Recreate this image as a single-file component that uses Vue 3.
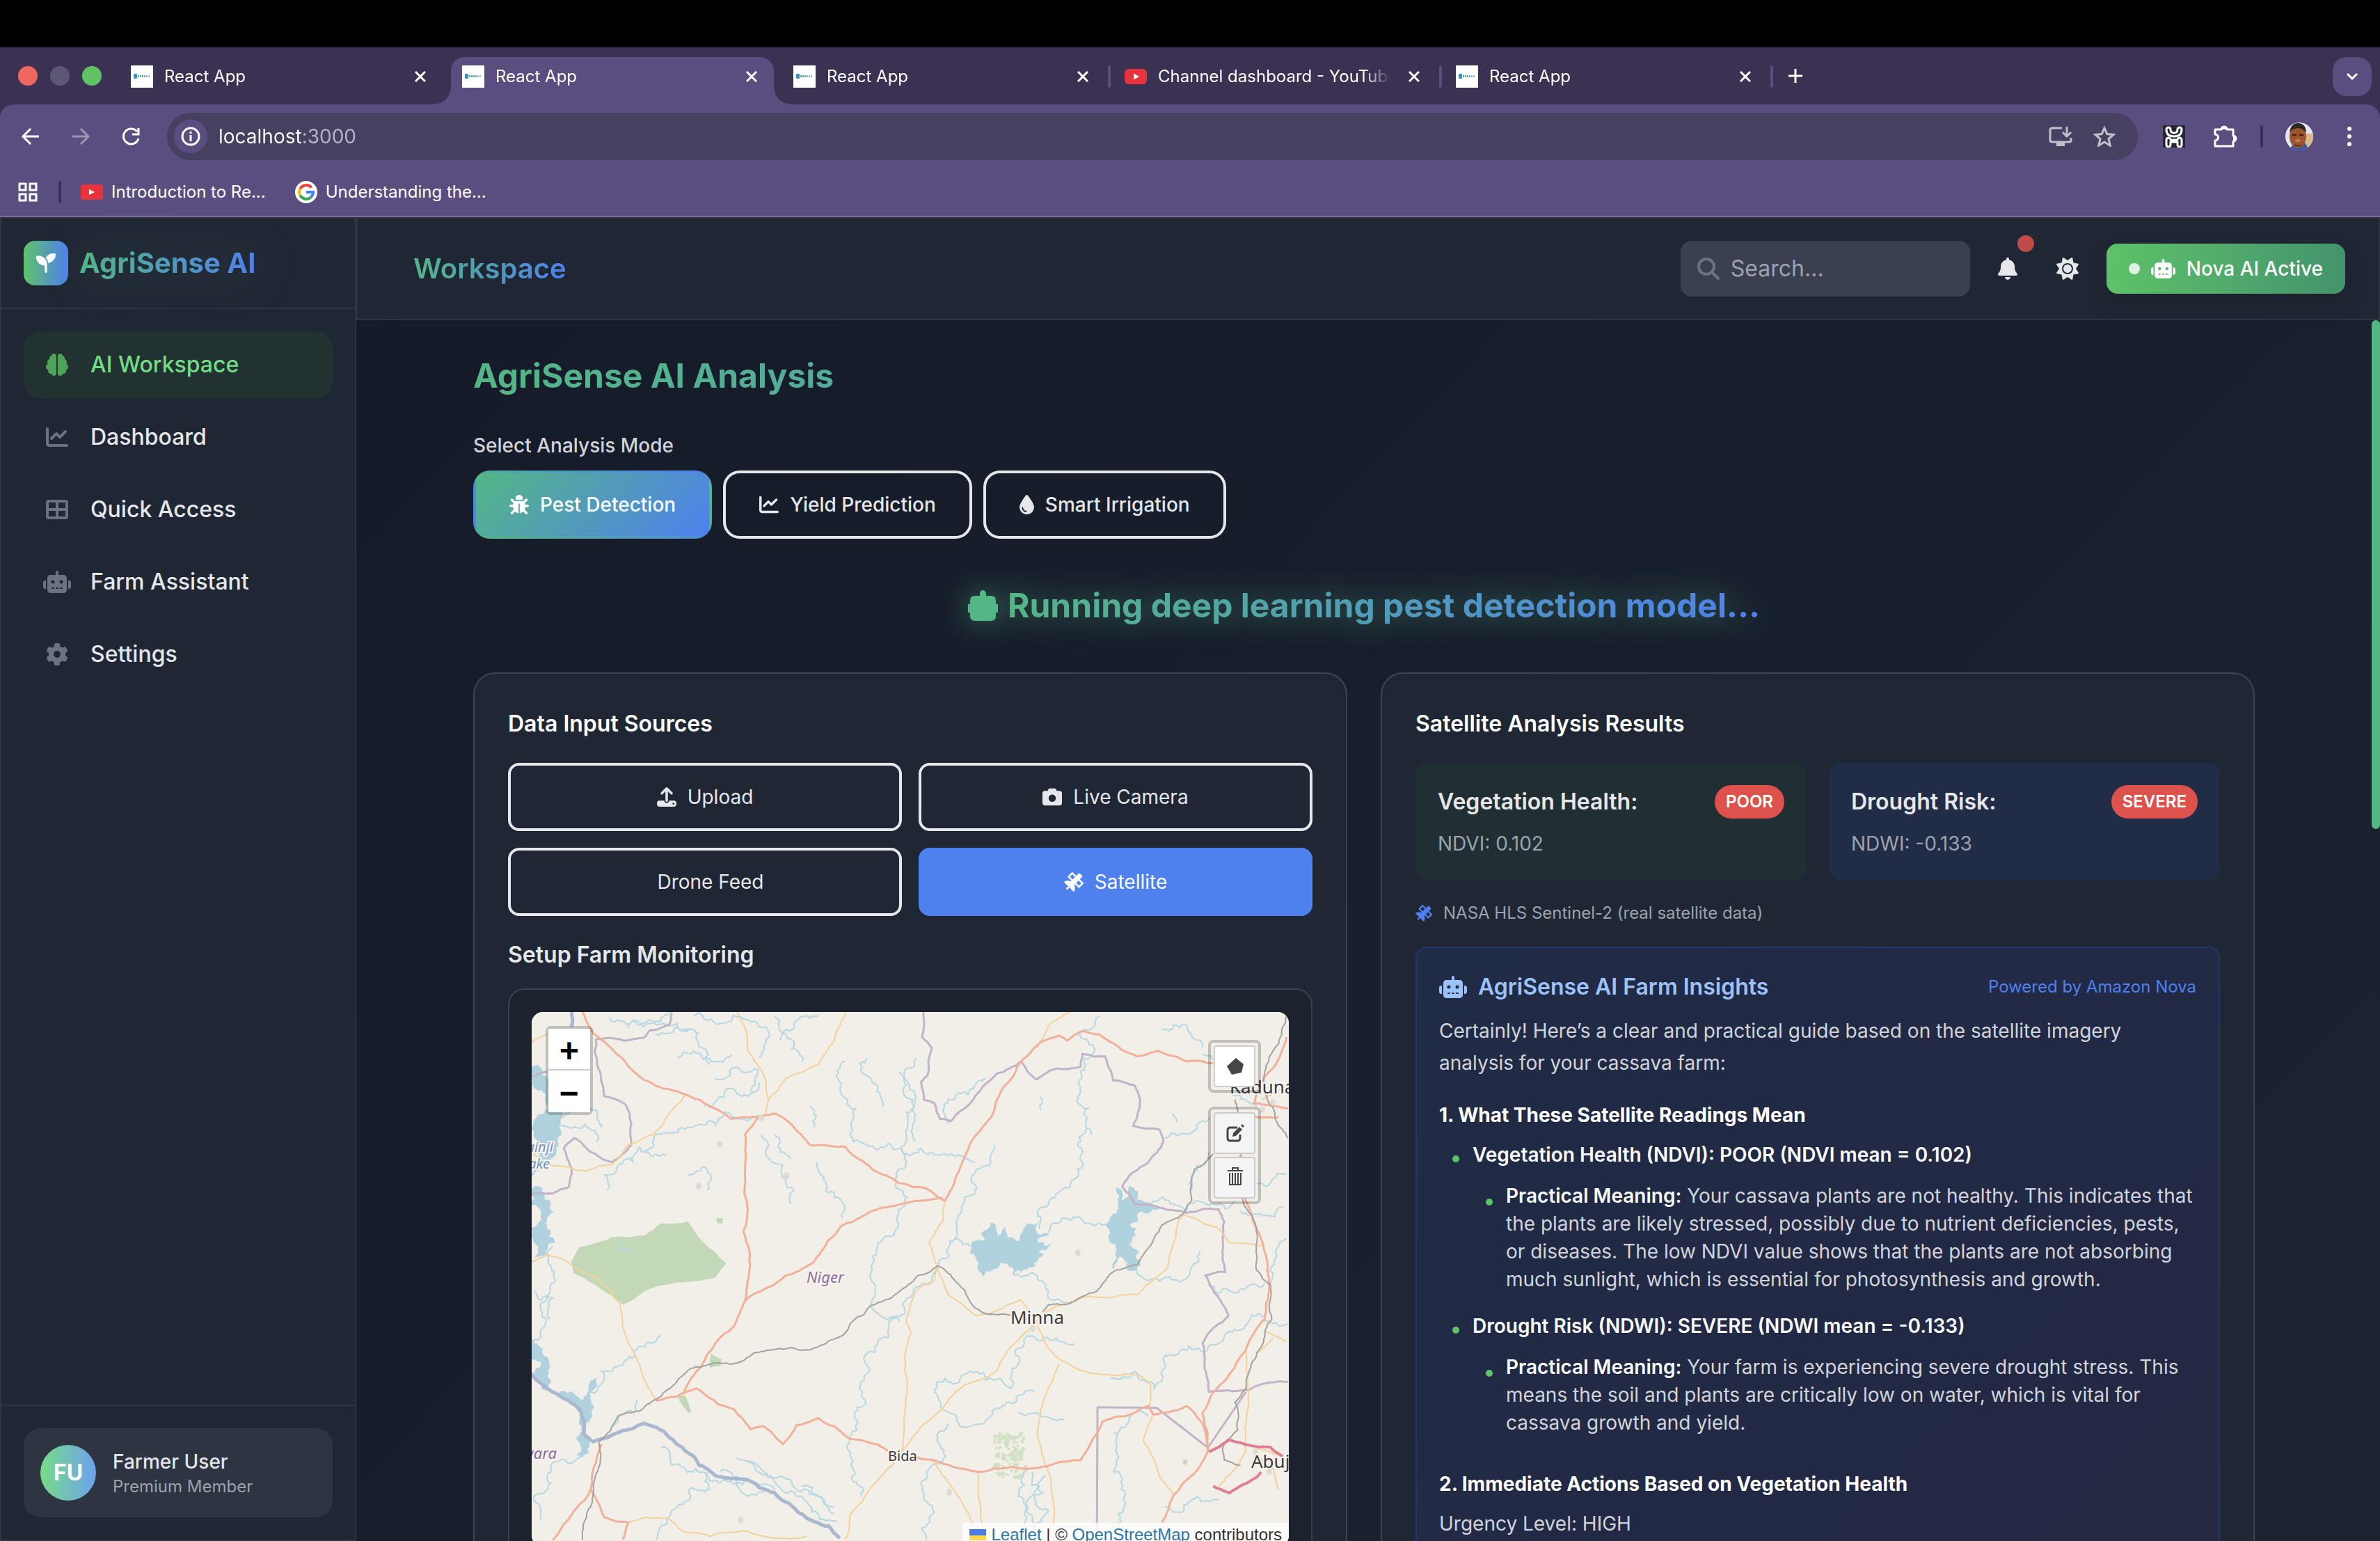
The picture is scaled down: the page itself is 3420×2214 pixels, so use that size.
<script setup>
import { h } from 'vue'

const glyphs = {
  brain: [512, 512, 'M184 0c30.9 0 56 25.1 56 56V456c0 30.9-25.1 56-56 56c-28.9 0-52.7-21.9-55.7-50.1c-5.2 1.4-10.7 2.1-16.3 2.1c-35.3 0-64-28.7-64-64c0-7.4 1.3-14.6 3.6-21.2C21.4 367.4 0 338.2 0 304c0-31.9 18.7-59.5 45.8-72.3C37.1 220.8 32 207 32 192c0-30.7 21.6-56.3 50.4-62.6C80.8 123.9 80 118 80 112c0-29.9 20.6-55.1 48.3-62.1C131.3 21.9 155.1 0 184 0zM328 0c28.9 0 52.6 21.9 55.7 49.9c27.8 7 48.3 32.1 48.3 62.1c0 6-.8 11.9-2.4 17.4c28.8 6.2 50.4 31.9 50.4 62.6c0 15-5.1 28.8-13.8 39.7C493.3 244.5 512 272.1 512 304c0 34.2-21.4 63.4-51.6 74.8c2.3 6.6 3.6 13.8 3.6 21.2c0 35.3-28.7 64-64 64c-5.6 0-11.1-.7-16.3-2.1c-3 28.2-26.8 50.1-55.7 50.1c-30.9 0-56-25.1-56-56V56c0-30.9 25.1-56 56-56z'],
  chart: [512, 512, 'M64 64c0-17.7-14.3-32-32-32S0 46.3 0 64V400c0 44.2 35.8 80 80 80H480c17.7 0 32-14.3 32-32s-14.3-32-32-32H80c-8.8 0-16-7.2-16-16V64zm406.6 86.6c12.5-12.5 12.5-32.8 0-45.3s-32.8-12.5-45.3 0L320 210.7l-57.4-57.4c-12.5-12.5-32.8-12.5-45.3 0l-112 112c-12.5 12.5-12.5 32.8 0 45.3s32.8 12.5 45.3 0L240 221.3l57.4 57.4c12.5 12.5 32.8 12.5 45.3 0l128-128z'],
  grid: [512, 512, 'M64 32H448a64 64 0 0 1 64 64V416a64 64 0 0 1-64 64H64a64 64 0 0 1-64-64V96a64 64 0 0 1 64-64zM448 96H288V224H448zM448 288H288V416H448zM224 224V96H64V224zM64 416H224V288H64z'],
  robot: [640, 512, 'M320 0c17.7 0 32 14.3 32 32V96H472c39.8 0 72 32.2 72 72V440c0 39.8-32.2 72-72 72H168c-39.8 0-72-32.2-72-72V168c0-39.8 32.2-72 72-72H288V32c0-17.7 14.3-32 32-32zM208 384c-8.8 0-16 7.2-16 16s7.2 16 16 16h32c8.8 0 16-7.2 16-16s-7.2-16-16-16H208zm96 0c-8.8 0-16 7.2-16 16s7.2 16 16 16h32c8.8 0 16-7.2 16-16s-7.2-16-16-16H304zm96 0c-8.8 0-16 7.2-16 16s7.2 16 16 16h32c8.8 0 16-7.2 16-16s-7.2-16-16-16H400zM264 256a40 40 0 1 0 -80 0 40 40 0 1 0 80 0zm152 40a40 40 0 1 0 0-80 40 40 0 1 0 0 80zM48 224H64V416H48c-26.5 0-48-21.5-48-48V272c0-26.5 21.5-48 48-48zm544 0c26.5 0 48 21.5 48 48v96c0 26.5-21.5 48-48 48H576V224h16z'],
  gear: [512, 512, 'M495.9 166.6c3.2 8.7 .5 18.4-6.4 24.6l-43.3 39.4c1.1 8.3 1.7 16.8 1.7 25.4s-.6 17.1-1.7 25.4l43.3 39.4c6.9 6.2 9.6 15.9 6.4 24.6c-4.4 11.9-9.7 23.3-15.8 34.3l-4.7 8.1c-6.6 11-14 21.4-22.1 31.2c-5.9 7.2-15.7 9.6-24.5 6.8l-55.7-17.7c-13.4 10.3-28.2 18.9-44 25.4l-12.5 57.1c-2 9.1-9 16.3-18.2 17.8c-13.8 2.3-28 3.5-42.5 3.5s-28.7-1.2-42.5-3.5c-9.2-1.5-16.2-8.7-18.2-17.8l-12.5-57.1c-15.8-6.5-30.6-15.1-44-25.4L83.1 425.9c-8.8 2.8-18.6 .3-24.5-6.8c-8.1-9.8-15.5-20.2-22.1-31.2l-4.7-8.1c-6.1-11-11.4-22.4-15.8-34.3c-3.2-8.7-.5-18.4 6.4-24.6l43.3-39.4C64.6 273.1 64 264.6 64 256s.6-17.1 1.7-25.4L22.4 191.2c-6.9-6.2-9.6-15.9-6.4-24.6c4.4-11.9 9.7-23.3 15.8-34.3l4.7-8.1c6.6-11 14-21.4 22.1-31.2c5.9-7.2 15.7-9.6 24.5-6.8l55.7 17.7c13.4-10.3 28.2-18.9 44-25.4l12.5-57.1c2-9.1 9-16.3 18.2-17.8C227.3 1.2 241.5 0 256 0s28.7 1.2 42.5 3.5c9.2 1.5 16.2 8.7 18.2 17.8l12.5 57.1c15.8 6.5 30.6 15.1 44 25.4l55.7-17.7c8.8-2.8 18.6-.3 24.5 6.8c8.1 9.8 15.5 20.2 22.1 31.2l4.7 8.1c6.1 11 11.4 22.4 15.8 34.3zM256 336a80 80 0 1 0 0-160 80 80 0 1 0 0 160z'],
  sun: [512, 512, 'M361.5 1.2c5 2.1 8.6 6.6 9.6 11.9L391 121l107.9 19.8c5.3 1 9.8 4.6 11.9 9.6s1.5 10.7-1.6 15.2L446.9 256l62.3 90.3c3.1 4.5 3.7 10.2 1.6 15.2s-6.6 8.6-11.9 9.6L391 391 371.1 498.9c-1 5.3-4.6 9.8-9.6 11.9s-10.7 1.5-15.2-1.6L256 446.9l-90.3 62.3c-4.5 3.1-10.2 3.7-15.2 1.6s-8.6-6.6-9.6-11.9L121 391 13.1 371.1c-5.3-1-9.8-4.6-11.9-9.6s-1.5-10.7 1.6-15.2L65.1 256 2.8 165.7c-3.1-4.5-3.7-10.2-1.6-15.2s6.6-8.6 11.9-9.6L121 121 140.9 13.1c1-5.3 4.6-9.8 9.6-11.9s10.7-1.5 15.2 1.6L256 65.1 346.3 2.8c4.5-3.1 10.2-3.7 15.2-1.6zM160 256a96 96 0 1 1 192 0 96 96 0 1 1 -192 0zm224 0a128 128 0 1 0 -256 0 128 128 0 1 0 256 0z'],
  bell: [448, 512, 'M224 0c-17.7 0-32 14.3-32 32V51.2C119 66 64 130.6 64 208v18.8c0 47-17.3 92.4-48.5 127.6l-7.4 8.3c-8.4 9.4-10.4 22.9-5.3 34.4S19.4 416 32 416H416c12.6 0 24-7.4 29.2-18.9s3.1-25-5.3-34.4l-7.4-8.3C401.3 319.2 384 273.9 384 226.8V208c0-77.4-55-142-128-156.8V32c0-17.7-14.3-32-32-32zm45.3 493.3c12-12 18.7-28.3 18.7-45.3H224 160c0 17 6.7 33.3 18.7 45.3s28.3 18.7 45.3 18.7s33.3-6.7 45.3-18.7z'],
  search: [512, 512, 'M416 208c0 45.9-14.9 88.3-40 122.7L502.6 457.4c12.5 12.5 12.5 32.8 0 45.3s-32.8 12.5-45.3 0L330.7 376c-34.4 25.2-76.8 40-122.7 40C93.1 416 0 322.9 0 208S93.1 0 208 0S416 93.1 416 208zM208 352a144 144 0 1 0 0-288 144 144 0 1 0 0 288z'],
  seedling: [512, 512, 'M512 32c0 113.6-84.6 207.5-194.2 222c-7.1-53.4-30.6-101.6-65.3-139.3C290.8 46.3 364 0 448 0h32c17.7 0 32 14.3 32 32zM0 96C0 78.3 14.3 64 32 64H64c123.7 0 224 100.3 224 224v32V480c0 17.7-14.3 32-32 32s-32-14.3-32-32V320C100.3 320 0 219.7 0 96z'],
  drop: [384, 512, 'M192 512C86 512 0 426 0 320C0 228.8 130.2 57.7 166.6 11.7C172.6 4.2 181.5 0 191.1 0h1.8c9.6 0 18.5 4.2 24.5 11.7C253.8 57.7 384 228.8 384 320c0 106-86 192-192 192zM96 336c0-8.8-7.2-16-16-16s-16 7.2-16 16c0 61.9 50.1 112 112 112c8.8 0 16-7.2 16-16s-7.2-16-16-16c-44.2 0-80-35.8-80-80z'],
  camera: [512, 512, 'M149.1 64.8L138.7 96H64C28.7 96 0 124.7 0 160V416c0 35.3 28.7 64 64 64H448c35.3 0 64-28.7 64-64V160c0-35.3-28.7-64-64-64H373.3L362.9 64.8C356.4 45.2 338.1 32 317.4 32H194.6c-20.7 0-39 13.2-45.5 32.8zM256 192a96 96 0 1 1 0 192 96 96 0 1 1 0-192z'],
  upload: [512, 512, 'M288 109.3V352c0 17.7-14.3 32-32 32s-32-14.3-32-32V109.3l-73.4 73.4c-12.5 12.5-32.8 12.5-45.3 0s-12.5-32.8 0-45.3l128-128c12.5-12.5 32.8-12.5 45.3 0l128 128c12.5 12.5 12.5 32.8 0 45.3s-32.8 12.5-45.3 0L288 109.3zM64 352H192c0 35.3 28.7 64 64 64s64-28.7 64-64H448c35.3 0 64 28.7 64 64v32c0 35.3-28.7 64-64 64H64c-35.3 0-64-28.7-64-64V416c0-35.3 28.7-64 64-64zM432 456a24 24 0 1 0 0-48 24 24 0 1 0 0 48z'],
  satellite: [512, 512, 'M233 7c-9.4-9.4-24.6-9.4-33.9 0l-96 96c-9.4 9.4-9.4 24.6 0 33.9l89.4 89.4-15.5 15.5C152.3 230.4 124.9 224 96 224c-31.7 0-61.5 7.7-87.8 21.2c-9 4.7-10.3 16.7-3.1 23.8L112.7 376.7 96.3 393.1c-2.6-.7-5.4-1.1-8.3-1.1c-17.7 0-32 14.3-32 32s14.3 32 32 32s32-14.3 32-32c0-2.9-.4-5.6-1.1-8.3l16.4-16.4L242.9 506.9c7.2 7.2 19.2 5.9 23.8-3.1C280.3 477.5 288 447.7 288 416c0-28.9-6.4-56.3-17.8-80.9l15.5-15.5 89.4 89.4c9.4 9.4 24.6 9.4 33.9 0l96-96c9.4-9.4 9.4-24.6 0-33.9l-89.4-89.4 55-55c12.5-12.5 12.5-32.8 0-45.3l-48-48c-12.5-12.5-32.8-12.5-45.3 0l-55 55L233 7zm159 351l-72.4-72.4 62.1-62.1L454.1 296 392 358.1zM226.3 192.4L153.9 120 216 57.9l72.4 72.4-62.1 62.1z'],
  bug: [512, 512, 'M256 0c53 0 96 43 96 96v3.6c0 15.7-12.7 28.4-28.4 28.4H188.4c-15.7 0-28.4-12.7-28.4-28.4V96c0-53 43-96 96-96zM41.4 105.4c12.5-12.5 32.8-12.5 45.3 0l64 64c.7 .7 1.3 1.4 1.9 2.1c14.2-7.3 30.4-11.4 47.5-11.4H312c17.1 0 33.2 4.1 47.5 11.4c.6-.7 1.2-1.4 1.9-2.1l64-64c12.5-12.5 32.8-12.5 45.3 0s12.5 32.8 0 45.3l-64 64c-.7 .7-1.4 1.3-2.1 1.9c6.2 12 10.1 25.3 11.1 39.5H480c17.7 0 32 14.3 32 32s-14.3 32-32 32H416c0 24.6-5.5 47.8-15.4 68.6c2.2 1.3 4.2 2.9 6 4.8l64 64c12.5 12.5 12.5 32.8 0 45.3s-32.8 12.5-45.3 0l-63.1-63.1c-24.5 21.8-55.8 36.2-90.3 39.6V240c0-8.8-7.2-16-16-16s-16 7.2-16 16V479.2c-34.5-3.4-65.8-17.8-90.3-39.6L86.6 502.6c-12.5 12.5-32.8 12.5-45.3 0s-12.5-32.8 0-45.3l64-64c1.9-1.9 3.9-3.4 6-4.8C101.5 367.8 96 344.6 96 320H32c-17.7 0-32-14.3-32-32s14.3-32 32-32H96.3c1.1-14.1 5-27.5 11.1-39.5c-.7-.6-1.4-1.2-2.1-1.9l-64-64c-12.5-12.5-12.5-32.8 0-45.3z'],
}

const Icon = (props) => {
  const [w, ht, d] = glyphs[props.name]
  return h(
    'svg',
    { width: (props.size * w) / ht, height: props.size, viewBox: `0 0 ${w} ${ht}`, 'aria-hidden': 'true' },
    [h('path', { fill: 'currentColor', 'fill-rule': 'evenodd', d })],
  )
}
Icon.props = ['name', 'size']

const tabs = [
  { title: 'React App', kind: 'app' },
  { title: 'React App', kind: 'app', active: true },
  { title: 'React App', kind: 'app', divider: true },
  { title: 'Channel dashboard - YouTube', kind: 'video', divider: true },
  { title: 'React App', kind: 'app', divider: true },
]

const nav = [
  { label: 'AI Workspace', icon: 'brain', active: true },
  { label: 'Dashboard', icon: 'chart' },
  { label: 'Quick Access', icon: 'grid' },
  { label: 'Farm Assistant', icon: 'robot' },
  { label: 'Settings', icon: 'gear' },
]

const modes = [
  { label: 'Pest Detection', icon: 'bug', active: true },
  { label: 'Yield Prediction', icon: 'chart' },
  { label: 'Smart Irrigation', icon: 'drop' },
]

const sources = [
  { label: 'Upload', icon: 'upload' },
  { label: 'Live Camera', icon: 'camera' },
  { label: 'Drone Feed' },
  { label: 'Satellite', icon: 'satellite', active: true },
]

const stats = [
  { name: 'Vegetation Health:', level: 'POOR', reading: 'NDVI: 0.102', tone: 'green' },
  { name: 'Drought Risk:', level: 'SEVERE', reading: 'NDWI: -0.133', tone: 'blue' },
]

const findings = [
  {
    title: 'Vegetation Health (NDVI): POOR (NDVI mean = 0.102)',
    text: 'Your cassava plants are not healthy. This indicates that the plants are likely stressed, possibly due to nutrient deficiencies, pests, or diseases. The low NDVI value shows that the plants are not absorbing much sunlight, which is essential for photosynthesis and growth.',
  },
  {
    title: 'Drought Risk (NDWI): SEVERE (NDWI mean = -0.133)',
    text: 'Your farm is experiencing severe drought stress. This means the soil and plants are critically low on water, which is vital for cassava growth and yield.',
  },
]

/* Map drawing: survey points are projected to the panel, then roughened by midpoint displacement. */
let seed = 7
const rand = () => {
  seed = (seed * 16807) % 2147483647
  return seed / 2147483647 - 0.5
}
const parse = (s) => s.split(' ').map((p) => p.split(',').map(Number)).map(([x, y]) => [(x - 31) * 0.778, (y - 48) * 0.5])
const rough = (s, amp = 0.2, close = false) => {
  let pts = parse(s)
  if (close) pts.push(pts[0])
  for (let n = 0; n < 6; n++) {
    const out = [pts[0]]
    for (let i = 1; i < pts.length; i++) {
      const [a, b] = [pts[i - 1], pts[i]]
      const dx = b[0] - a[0]
      const dy = b[1] - a[1]
      if (Math.hypot(dx, dy) > 6) {
        const k = rand() * amp
        out.push([(a[0] + b[0]) / 2 - dy * k, (a[1] + b[1]) / 2 + dx * k])
      }
      out.push(b)
    }
    pts = out
  }
  return 'M' + pts.map((p) => p.map((v) => v.toFixed(1)).join(',')).join('L') + (close ? 'Z' : '')
}

const lakes = [
  '31,205 50,215 60,240 62,330 88,345 85,400 75,450 65,470 45,500 31,520',
  '31,562 50,555 50,590 65,600 58,640 62,690 72,710 55,745 40,750 45,720 35,700 31,690',
  '842,740 845,710 870,705 862,685 880,655 890,695 905,670 908,700 930,710 955,660 965,655 970,690 985,685 965,710 990,714 965,735 975,745 945,765 960,775 940,785 920,800 910,770 895,765 870,790 865,805 858,770',
  '1112,555 1120,590 1135,550 1150,590 1190,610 1150,625 1135,660 1145,690 1130,720 1155,775 1135,790 1120,750 1105,785 1098,700 1100,640 1115,600',
  '80,1150 104,1140 128,1165 150,1100 138,1160 142,1210 128,1260 124,1325 116,1320 120,1230 122,1195 96,1165',
  '31,990 50,1030 62,1060 66,1110 50,1130 50,1060 31,1010',
].map((s) => rough(s, 0.6, true))

const parks = [
  '120,722 180,695 240,690 270,655 320,650 345,705 390,770 370,812 300,825 240,850 200,890 160,845 108,798 104,765',
  '372,640 384,640 384,655 374,655',
  '362,1030 382,1045 380,1065 360,1070',
  '300,1150 315,1150 326,1195 320,1200',
  '1234,1335 1243,1335 1240,1350 1234,1346',
].map((s) => rough(s, 0.1, true))

const streams = [
  '175,65 260,75 290,50', '210,95 250,70 300,80 340,110', '260,110 300,90 345,150 360,200', '330,60 380,80 430,70 470,110 450,180',
  '300,180 330,160 370,190 400,170', '370,240 400,210 450,215 440,280', '350,320 390,270 430,290 450,250', '490,130 510,100 560,60', '480,60 500,110 530,190',
  '40,380 90,375 130,370 150,420', '90,350 130,300 150,330 160,380', '60,260 90,230 120,270', '170,560 190,490 280,460', '320,520 355,500 355,560', '240,445 260,400 340,370 440,345',
  '455,400 470,470 500,530 510,600', '480,400 490,450 510,470', '560,480 570,530 590,580 605,640', '545,320 552,380', '610,190 615,300 625,420 650,430 690,425 720,455 750,440 800,460 850,480',
  '650,180 640,220 670,260 680,320', '710,220 740,300 725,380 720,470 715,560 705,640 700,690 670,720 660,750 665,830 660,900 710,940', '740,180 735,300 740,420', '800,370 790,330 820,280 870,240',
  '885,430 870,490 850,510 830,580 815,650 812,700 780,780 760,830 720,880 690,950 670,1000 655,1080 640,1150 632,1250 625,1340 622,1390 640,1440', '812,700 845,720',
  '1080,60 1040,110 1070,150 1045,220 1040,290 1055,370 1050,450 1040,520 1000,570 965,620 968,670', '970,290 972,330', '1195,100 1240,85 1270,150', '1200,410 1250,395 1285,350', '1215,340 1222,365',
  '985,680 1010,640 1040,635 1060,655 1100,660', '920,800 980,830 985,870 1030,885', '1150,780 1190,820 1240,815 1250,780 1265,735', '1280,830 1320,850 1360,830 1385,825',
  '1425,700 1405,740 1400,810 1390,830', '1100,1100 1180,1130 1195,1080 1230,1020 1290,1005 1330,960 1428,945', '775,1140 780,1110 830,1090 870,1105 915,1130', '775,1140 790,1190 820,1230 870,1220 900,1180 930,1150 960,1135',
  '940,990 1000,985 1035,1000', '940,990 930,1060 915,1130', '800,1230 780,1280 790,1340 760,1370 755,1440 765,1500 760,1565', '930,1200 980,1210 1015,1220', '1170,1210 1120,1240 1115,1330 1120,1400 1125,1470 1095,1530',
  '270,975 240,1010 220,1040 160,1080 140,1140', '225,1160 220,1200 180,1240', '125,1325 80,1340 60,1380 35,1440 50,1510', '355,1370 360,1420 300,1470 280,1520 260,1565', '270,1300 290,1350 350,1370 410,1400 480,1420',
  '410,1330 460,1370 500,1390 540,1420 590,1490', '430,1340 480,1400 530,1440 560,1490 595,1510', '380,1370 420,1430 460,1430', '530,1410 560,1440 590,1470', '940,1370 930,1440 945,1500 925,1565', '980,1380 960,1440 985,1480 960,1565',
  '955,1370 975,1430 945,1480 960,1530', '1200,1470 1260,1440 1300,1450', '1370,540 1425,510', '1330,590 1290,600 1240,620', '35,850 70,870 65,930', '70,720 75,820 50,920 35,990', '190,700 195,730 220,738', '1240,620 1150,610',
  '1270,170 1330,180 1320,260 1370,320', '1060,380 1065,400', '1280,450 1260,490 1250,560', '1340,620 1420,610',
].map((s) => rough(s, 0.6))

const bigRivers = [
  '31,1085 60,1130 100,1165 123,1200 127,1260 145,1283 200,1250 240,1230 280,1262 310,1300 340,1350 370,1380 420,1390 480,1430 520,1480 550,1510 580,1525 600,1560',
  '105,48 104,90',
].map((s) => rough(s, 0.2))

const borders = [
  '150,125 200,130 240,120 250,100 285,85 290,50', '150,125 152,200 165,290 205,315 215,370 215,430 180,480 140,450 110,410 90,440 105,500 100,550 70,570 31,570', '31,235 60,220',
  '755,48 752,120 770,150 762,230 750,250 755,300 775,310 785,355 805,362 825,330 850,290 890,225 935,190 950,225 965,242 1000,210 1045,205 1048,168 1090,175 1105,245 1145,260 1155,300 1142,375 1190,385 1198,420 1170,480 1140,510 1122,550 1145,600 1190,610 1240,625 1300,615 1310,650 1312,795 1275,805 1318,920 1270,1000 1282,1140 1350,1135 1428,1110',
].map((s) => rough(s, 0.15)).concat(rough('1350,1140 1280,1300 1185,1185 1076,1184 1075,1540', 0))

const trunks = [
  '125,48 145,110 180,155 220,220 260,260 315,285 360,320 400,355 440,350 480,340 510,370 545,430 610,435 660,500 710,540 760,555 795,590',
  '450,350 425,400 425,520 430,620 422,680 434,740 425,878', '425,878 500,805 550,770 578,705 605,660 680,610 740,590 790,582', '425,878 405,950 370,1000 345,1065 310,1145',
  '795,590 815,520 840,430 880,350 900,270 935,190 970,135 1005,115 1020,130 1050,102 1080,112 1120,155 1150,175 1190,160 1240,190 1290,195', '260,1165 335,1130 375,1175 405,1190 435,1247 460,1238 495,1290 520,1235 560,1215 620,1275 670,1290 690,1310 770,1335 855,1370 920,1355 1045,1335 1085,1225 1170,1180 1180,1205 1240,1180 1270,1230 1280,1310 1250,1380 1215,1440 1195,1515',
  '1425,120 1400,210 1385,235 1365,310 1428,325', '1340,460 1350,590 1370,670 1390,770 1385,930 1350,1020 1290,1140 1270,1200 1280,1310', '1365,350 1410,350', '140,1420 165,1500 210,1515 200,1565', '140,1420 110,1480 70,1565', '160,1290 145,1360 140,1420',
].map((s) => rough(s, 0.12))

const roads = [
  '410,48 425,90 430,160 455,215 468,300 462,345', '468,300 500,240 560,200 590,130 612,48', '31,135 60,110 145,100', '315,285 290,330 255,400 210,430 180,485 130,505 70,490 31,450',
  '31,765 60,745 105,775 150,810 195,890 200,960 230,1060 262,1165', '795,590 790,650 765,710 780,780 775,820 740,850 722,940 732,970 720,1040 722,1180 715,1310', '780,780 800,860 850,920 900,900 935,875 965,940',
  '1025,48 990,80 965,150', '980,910 1060,865 1150,860 1205,785 1225,650 1235,630 1300,670 1320,710 1380,720', '965,950 980,1000 1005,1045 1060,1085 1150,1090 1175,1120 1172,1180', '965,935 930,990 890,1080 830,1120 780,1200 740,1260 715,1310',
  '1005,1060 985,1130 965,1260 990,1390 995,1540', '715,1320 660,1410 620,1490 610,1565', '770,1335 810,1420 830,1470 855,1540', '855,1375 865,1540', '1180,1200 1160,1280 1190,1380 1215,1430',
  '210,1515 240,1500 285,1505 310,1540 360,1555 430,1540 480,1560 540,1555', '1350,1020 1355,1180 1350,1310 1300,1410', '1385,965 1425,995', '1400,985 1370,1030', '1380,300 1428,260', '1375,1330 1400,1360 1410,1420', '1370,1300 1410,1320',
].map((s) => rough(s, 0.12))

const rails = [
  '125,1565 135,1480 145,1430 155,1285 190,1210 230,1195 280,1135 325,1072 400,1060 490,1015 530,1020 575,1000 610,970 625,935 660,890 720,840 745,805 780,778 810,815 845,890 870,915 915,920',
  '975,910 985,890 1020,888 1075,850 1100,800 1150,775 1165,735 1195,660 1225,640 1250,590 1255,500 1290,455', '1425,60 1400,160 1385,220 1390,300 1428,410', '1330,300 1345,420 1340,560 1368,660 1370,790 1395,830 1398,930 1360,1060 1350,1130 1330,1170 1335,1250 1310,1290 1310,1335 1340,1350',
].map((s) => rough(s, 0.2))

const motorways = ['1282,1312 1320,1278 1395,1298 1418,1325', '1290,1410 1320,1430 1370,1385 1378,1370'].map((s) => rough(s, 0.1))
const towns = [
  [330, 152], [366, 235], [720, 455], [1050, 140], [1065, 130], [1048, 645], [1060, 660], [1040, 632], [240, 250], [270, 190], [600, 690], [300, 730], [785, 346],
]
const scrub = Array.from({ length: 110 }, () => [688 + rand() * 46, 638 + rand() * 66, 1 + Math.abs(rand()) * 5])
</script>

<template>
  <div class="screen">
    <div class="notch"></div>

    <header class="browser">
      <div class="tab-strip">
        <div class="lights"><i class="red"></i><i class="grey"></i><i class="green"></i></div>
        <div class="tabs" role="tablist">
          <div v-for="(tab, i) in tabs" :key="i" class="tab" :class="{ active: tab.active, divider: tab.divider }" role="tab">
            <svg v-if="tab.kind === 'app'" width="32" height="32" viewBox="0 0 32 32">
              <rect width="32" height="32" fill="#fff" />
              <rect x="4" y="12" width="5" height="7" rx="1" fill="#3d8fc0" />
              <path d="M10 15.500H20" stroke="#52b788" stroke-width="3" stroke-dasharray="2 1" />
              <path d="M19 15.500H28" stroke="#5b9be8" stroke-width="2" stroke-dasharray="2 1" />
            </svg>
            <svg v-else width="32" height="32" viewBox="0 0 32 32">
              <rect y="5" width="32" height="22" rx="6" fill="#e8323c" />
              <path d="M13 11.500L21 16L13 20.500Z" fill="#fff" />
            </svg>
            <span class="tab-title">{{ tab.title }}</span>
            <button class="plain" aria-label="Close tab">
              <svg width="16" height="16" viewBox="0 0 16 16"><path d="M1 1L15 15M15 1L1 15" stroke="#fff" stroke-width="3" /></svg>
            </button>
          </div>
          <button class="plain new-tab" aria-label="New tab">
            <svg width="20" height="20" viewBox="0 0 20 20"><path d="M10 0V20M0 10H20" stroke="#fff" stroke-width="3" /></svg>
          </button>
        </div>
        <button class="tab-list" aria-label="Search tabs">
          <svg width="18" height="12" viewBox="0 0 18 12"><path d="M2 2L9 9L16 2" fill="none" stroke="#fff" stroke-width="3" /></svg>
        </button>
      </div>

      <div class="toolbar">
        <button class="plain" aria-label="Back">
          <svg width="28" height="28" viewBox="0 0 28 28"><path d="M26 14H4M14 3L3 14L14 25" fill="none" stroke="#fff" stroke-width="3" /></svg>
        </button>
        <button class="plain" aria-label="Forward">
          <svg width="28" height="28" viewBox="0 0 28 28"><path d="M2 14H24M14 3L25 14L14 25" fill="none" stroke="#9d95b3" stroke-width="3" /></svg>
        </button>
        <button class="plain" aria-label="Reload">
          <svg width="28" height="28" viewBox="0 0 28 28"><path d="M23 7A11 11 0 1 0 25 17" fill="none" stroke="#fff" stroke-width="3" /><path d="M25 2V11H16" fill="none" stroke="#fff" stroke-width="3" /></svg>
        </button>
        <div class="omnibox">
          <span class="site-info">
            <svg width="28" height="28" viewBox="0 0 28 28"><circle cx="14" cy="14" r="12" fill="none" stroke="#fff" stroke-width="3" /><path d="M14 12V21M14 7V10" stroke="#fff" stroke-width="3" /></svg>
          </span>
          <input class="url" type="text" aria-label="Address" value="localhost:3000" />
          <button class="plain" aria-label="Install app">
            <svg width="34" height="30" viewBox="0 0 34 30"><path d="M19 3H5Q2 3 2 6V20Q2 23 5 23H29Q32 23 32 20V17" fill="none" stroke="#c3c0cc" stroke-width="3" /><path d="M11 23H23V29H11Z" fill="#c3c0cc" /><path d="M26 1V14M20 9L26 15L32 9" fill="none" stroke="#c3c0cc" stroke-width="3" /></svg>
          </button>
          <button class="plain" aria-label="Bookmark this page">
            <svg width="32" height="30" viewBox="0 0 32 30"><path d="M16 3L19.800 11.500L29 12.500L22 18.600L24.200 28L16 23L7.800 28L10 18.600L3 12.500L12.200 11.500Z" fill="none" stroke="#c3c0cc" stroke-width="3" /></svg>
          </button>
        </div>
        <button class="plain ext" aria-label="Extension">
          <svg width="32" height="32" viewBox="0 0 32 32"><rect width="32" height="32" fill="#242634" /><g fill="none" stroke="#fff" stroke-width="3" stroke-linecap="round" stroke-linejoin="round"><path d="M8 3A3 3 0 0 0 5 6Q5 16 16 16Q27 16 27 6A3 3 0 0 0 21 6Q21 11 16 11Q11 11 11 6A3 3 0 0 0 8 3Z" /><path d="M5 28V21A3 3 0 0 1 11 21H21A3 3 0 0 1 27 21V28A3 3 0 0 1 21 28V24H11V28A3 3 0 0 1 5 28Z" /></g></svg>
        </button>
        <button class="plain puzzle" aria-label="Extensions">
          <svg width="36" height="36" viewBox="0 0 36 36"><path d="M3 8H12A4 4 0 0 1 20 8H29V17A4 4 0 0 1 29 25V32H3V24A4 4 0 0 0 3 15Z" fill="none" stroke="#fff" stroke-width="3" stroke-linejoin="round" /><path d="M12 8A4 4 0 0 1 20 8ZM29 17A4 4 0 0 1 29 25Z" fill="#fff" /></svg>
        </button>
        <i class="bar"></i>
        <button class="plain photo" aria-label="Profile">
          <svg width="40" height="40" viewBox="0 0 40 40">
            <defs><clipPath id="face"><circle cx="20" cy="20" r="20" /></clipPath></defs>
            <g clip-path="url(#face)">
              <rect width="40" height="40" fill="#dfe8f4" />
              <rect x="30" y="16" width="10" height="24" fill="#d9b98c" />
              <path d="M6 40L12 28H28L34 40Z" fill="#3a56a0" />
              <ellipse cx="18" cy="20" rx="12" ry="17" fill="#9a5631" />
              <path d="M6 14Q8 1 18 1Q29 1 30 14Q24 8 18 8Q11 8 6 14Z" fill="#2f2723" />
              <path d="M10 18H16M20 18H26" stroke="#3a1f14" stroke-width="2" />
              <ellipse cx="18" cy="26" rx="4" ry="2" fill="#c77a4c" />
              <path d="M13 32Q18 35 23 32" stroke="#5c2c1c" stroke-width="2" fill="none" />
            </g>
          </svg>
        </button>
        <button class="plain more" aria-label="Menu">
          <svg width="8" height="28" viewBox="0 0 8 28"><g fill="#fff"><circle cx="4" cy="3" r="3" /><circle cx="4" cy="14" r="3" /><circle cx="4" cy="25" r="3" /></g></svg>
        </button>
      </div>

      <nav class="bookmarks">
        <svg width="28" height="28" viewBox="0 0 28 28" fill="none" stroke="#fff" stroke-width="3"><path d="M2 2H11V11H2ZM17 2H26V11H17ZM2 17H11V26H2ZM17 17H26V26H17Z" /></svg>
        <i class="bar"></i>
        <a href="#">
          <svg width="32" height="32" viewBox="0 0 32 32"><rect y="5" width="32" height="22" rx="3" fill="#e8323c" /><path d="M12 12L20 16L12 20Z" fill="#fff" /></svg>
          Introduction to Re...
        </a>
        <a href="#">
          <svg width="32" height="32" viewBox="0 0 32 32"><circle cx="16" cy="16" r="16" fill="#fff" /><g fill="none" stroke-width="4"><path d="M23.500 9.500A10 10 0 0 0 7.300 11.200" stroke="#ea4335" /><path d="M7.300 11.200A10 10 0 0 0 7.300 20.800" stroke="#fbbc04" /><path d="M7.300 20.800A10 10 0 0 0 22.500 23.600" stroke="#34a853" /><path d="M22.500 23.600A10 10 0 0 0 26 16H16" stroke="#4285f4" /></g></svg>
          Understanding the...
        </a>
      </nav>
    </header>

    <div class="app">
      <aside class="sidebar">
        <div class="brand">
          <span class="logo"><Icon name="seedling" :size="28" /></span>
          <span class="brand-name">AgriSense AI</span>
        </div>
        <nav class="menu">
          <a v-for="item in nav" :key="item.label" href="#" :class="{ active: item.active }">
            <span class="menu-icon"><Icon :name="item.icon" :size="32" /></span>{{ item.label }}
          </a>
        </nav>
        <div class="account">
          <div class="account-card">
            <span class="avatar">FU</span>
            <div>
              <div class="user-name">Farmer User</div>
              <div class="user-plan">Premium Member</div>
            </div>
          </div>
        </div>
      </aside>

      <div class="content">
        <header class="topbar">
          <h1>Workspace</h1>
          <label class="search">
            <Icon name="search" :size="32" />
            <input type="search" placeholder="Search..." aria-label="Search" />
          </label>
          <button class="plain bell" aria-label="Notifications"><Icon name="bell" :size="32" /><i></i></button>
          <button class="plain sun" aria-label="Theme"><Icon name="sun" :size="32" /></button>
          <button class="nova"><i></i><Icon name="robot" :size="28" /><span>Nova AI Active</span></button>
        </header>

        <div class="viewport">
          <main>
            <h2 class="title">AgriSense AI Analysis</h2>
            <div class="label">Select Analysis Mode</div>
            <div class="modes">
              <button v-for="m in modes" :key="m.label" class="outline mode" :class="{ chosen: m.active }">
                <Icon :name="m.icon" :size="28" />{{ m.label }}
              </button>
            </div>

            <div class="status">
              <svg width="43" height="44" viewBox="0 0 43 44"><path d="M21.500 0C24 0 26 2 26 5V8H33Q40 8 40 15V20H43V32H40V37Q40 44 33 44H10Q3 44 3 37V32H0V20H3V15Q3 8 10 8H17V5C17 2 19 0 21.500 0Z" fill="#54b685" /></svg>
              <span>Running deep learning pest detection model...</span>
            </div>

            <div class="cards">
              <section class="card">
                <h3>Data Input Sources</h3>
                <div class="sources">
                  <button v-for="s in sources" :key="s.label" class="outline" :class="{ solid: s.active }">
                    <Icon v-if="s.icon" :name="s.icon" :size="28" />
                    <span v-else class="no-icon"></span>
                    {{ s.label }}
                  </button>
                </div>
                <h3 class="soft">Setup Farm Monitoring</h3>
                <div class="map-frame">
                  <div class="map">
                    <svg class="tiles" viewBox="0 0 1088 768" preserveAspectRatio="xMinYMin slice">
                      <rect width="1088" height="768" fill="#f2efe9" />
                      <path v-for="(d, i) in parks" :key="'p' + i" :d="d" fill="#c3d8b6" />
                      <circle v-for="(c, i) in scrub" :key="'s' + i" :cx="c[0]" :cy="c[1]" :r="c[2]" fill="#d2e1c5" />
                      <g fill="none" stroke="#b7d7e2" stroke-width="2">
                        <path v-for="(d, i) in streams" :key="'w' + i" :d="d" />
                      </g>
                      <path v-for="(d, i) in lakes" :key="'l' + i" :d="d" fill="#b0d2de" stroke="#b0d2de" stroke-width="2" />
                      <g fill="none" stroke-linejoin="round">
                        <path v-for="(d, i) in bigRivers" :key="'b' + i" :d="d" stroke="#a9b8cf" stroke-width="5" />
                        <path v-for="(d, i) in borders" :key="'o' + i" :d="d" stroke="#c3b3c8" stroke-width="3" />
                        <path v-for="(d, i) in roads" :key="'r' + i" :d="d" stroke="#f3d19b" stroke-width="2" />
                        <path v-for="(d, i) in trunks" :key="'t' + i" :d="d" stroke="#f1b09a" stroke-width="3" />
                        <path v-for="(d, i) in rails" :key="'a' + i" :d="d" stroke="#a5a29e" stroke-width="2" />
                        <path v-for="(d, i) in motorways" :key="'m' + i" :d="d" stroke="#df7f93" stroke-width="4" />
                      </g>
                      <g fill="#dedbd7">
                        <ellipse v-for="(t, i) in towns" :key="'c' + i" :cx="t[0]" :cy="t[1]" rx="4" ry="5" />
                      </g>
                      <g class="places">
                        <text x="688" y="448" font-size="26">Minna</text>
                        <text x="512" y="645" font-size="20">Bida</text>
                        <text x="1003" y="117" font-size="26">Kaduna</text>
                        <text x="1034" y="655" font-size="26">Abuja</text>
                      </g>
                      <g class="regions">
                        <text x="395" y="389" font-size="22" fill="#8c6f9c">Niger</text>
                        <text x="36" y="642" font-size="22" fill="#8c6f9c" text-anchor="end">Kwara</text>
                        <text x="31" y="201" font-size="20" fill="#7097c4" text-anchor="end">Kainji</text>
                        <text x="26" y="225" font-size="20" fill="#7097c4" text-anchor="end">Lake</text>
                      </g>
                    </svg>
                    <div class="zoom">
                      <button aria-label="Zoom in">+</button>
                      <button aria-label="Zoom out">−</button>
                    </div>
                    <div class="draw">
                      <div class="group">
                        <button aria-label="Draw a polygon"><svg width="28" height="26" viewBox="0 0 28 26"><path d="M16 1L27 10L24 22L10 25L3 13Z" fill="#464646" /></svg></button>
                      </div>
                      <div class="group pale">
                        <button aria-label="Edit layers"><svg width="28" height="28" viewBox="0 0 28 28"><path d="M18 6H8Q4 6 4 10V21Q4 25 8 25H18Q22 25 22 21V16" fill="none" stroke="#464646" stroke-width="3" /><path d="M11 19L12 14L21 5L25 9L16 18Z" fill="#464646" /><path d="M23 3L25 1L28 4L26 6Z" fill="#464646" /></svg></button>
                        <button aria-label="Delete layers"><svg width="28" height="32" viewBox="0 0 28 32"><path d="M4 6H26M11 5V2H19V5" fill="none" stroke="#464646" stroke-width="2" /><path d="M7 9V26H23V9M11 9V26M15 9V26M19 9V26" fill="none" stroke="#464646" stroke-width="2" /></svg></button>
                      </div>
                    </div>
                    <div class="credit">
                      <svg width="24" height="16" viewBox="0 0 24 16"><path d="M0 0H24V9H0Z" fill="#4c7be1" /><path d="M0 9H24V16H0Z" fill="#ffd84a" /></svg>
                      <span><a href="#">Leaflet</a> | © <a href="#">OpenStreetMap</a> contributors</span>
                    </div>
                  </div>
                </div>
              </section>

              <section class="card">
                <h3>Satellite Analysis Results</h3>
                <div class="stats">
                  <div v-for="s in stats" :key="s.name" class="stat" :class="s.tone">
                    <div class="stat-head"><span>{{ s.name }}</span><span class="badge">{{ s.level }}</span></div>
                    <div class="reading">{{ s.reading }}</div>
                  </div>
                </div>
                <div class="origin"><Icon name="satellite" :size="24" /><span>NASA HLS Sentinel-2 (real satellite data)</span></div>
                <article class="insights">
                  <div class="insights-head">
                    <Icon name="robot" :size="32" />
                    <h4>AgriSense AI Farm Insights</h4>
                    <span>Powered by Amazon Nova</span>
                  </div>
                  <p>Certainly! Here’s a clear and practical guide based on the satellite imagery analysis for your cassava farm:</p>
                  <h5>1. What These Satellite Readings Mean</h5>
                  <ul>
                    <li v-for="f in findings" :key="f.title">
                      <strong>{{ f.title }}</strong>
                      <ul>
                        <li><strong>Practical Meaning:</strong> {{ f.text }}</li>
                      </ul>
                    </li>
                  </ul>
                  <h5 class="next">2. Immediate Actions Based on Vegetation Health</h5>
                  <p>Urgency Level: HIGH</p>
                </article>
              </section>
            </div>
          </main>
          <div class="scrollbar"><i></i></div>
        </div>
      </div>
    </div>
  </div>
</template>

<style>
html,
body {
  background: #151b29;
  overflow: hidden;
}
</style>

<style scoped>
* {
  box-sizing: border-box;
}
h1, h2, h3, h4, h5, p, ul {
  margin: 0;
}
svg {
  display: block;
  flex: none;
}
a {
  color: inherit;
  text-decoration: none;
}
button,
input {
  font: inherit;
  color: inherit;
}
.plain {
  display: flex;
  align-items: center;
  justify-content: center;
  padding: 0;
  border: 0;
  background: none;
}
.screen {
  display: flex;
  flex-direction: column;
  height: 100vh;
  overflow: hidden;
  font-family: Inter, "Liberation Sans", sans-serif;
  font-size: 28px;
  line-height: 40px;
  color: #e5e7eb;
}
.notch {
  flex: none;
  height: 68px;
  background: #000;
}

/* Browser chrome */
.browser {
  flex: none;
  background: #3b3253;
  border-bottom: 2px solid #7a7098;
  color: #fff;
}
.tab-strip {
  display: flex;
  align-items: stretch;
  height: 82px;
  padding: 14px 12px 0 26px;
}
.lights {
  display: flex;
  align-items: center;
  gap: 18px;
  width: 146px;
  padding-bottom: 14px;
}
.lights i {
  width: 28px;
  height: 28px;
  border-radius: 50%;
}
.red { background: #ee6660; }
.grey { background: #5e5675; }
.green { background: #61c263; }
.tabs {
  flex: 1;
  display: flex;
  gap: 12px;
  min-width: 0;
}
.tab {
  position: relative;
  flex: 0 1 464px;
  display: flex;
  align-items: center;
  min-width: 0;
  padding: 0 24px 12px 16px;
  border-radius: 20px 20px 0 0;
  font-size: 24px;
  line-height: 32px;
}
.tab-title {
  flex: 1;
  margin: 0 26px 0 16px;
  overflow: hidden;
  white-space: nowrap;
  mask-image: linear-gradient(90deg, #000 88%, transparent);
}
.tab.active {
  background: #5a4e80;
}
.tab.active::before,
.tab.active::after {
  content: "";
  position: absolute;
  bottom: 0;
  width: 24px;
  height: 24px;
}
.tab.active::before {
  right: 100%;
  background: radial-gradient(circle at 0 0, transparent 23px, #5a4e80 24px);
}
.tab.active::after {
  left: 100%;
  background: radial-gradient(circle at 100% 0, transparent 23px, #5a4e80 24px);
}
.tab.divider::after {
  content: "";
  position: absolute;
  right: -8px;
  top: 12px;
  width: 4px;
  height: 32px;
  border-radius: 2px;
  background: #5a4e80;
}
.new-tab {
  width: 56px;
  padding-bottom: 14px;
}
.tab-list {
  display: flex;
  align-items: center;
  justify-content: center;
  width: 56px;
  height: 56px;
  padding: 0;
  border: 0;
  border-radius: 20px;
  background: #5a4e80;
}
.toolbar {
  display: flex;
  align-items: center;
  height: 92px;
  padding: 0 40px 0 30px;
  background: #5a4e80;
  border-radius: 20px 20px 0 0;
}
.toolbar > .plain + .plain {
  margin-left: 44px;
}
.omnibox {
  flex: 1;
  display: flex;
  align-items: center;
  gap: 30px;
  height: 68px;
  margin-left: 38px;
  padding: 0 32px 0 10px;
  border-radius: 34px;
  background: #474061;
}
.site-info {
  display: flex;
  align-items: center;
  justify-content: center;
  width: 48px;
  height: 48px;
  border-radius: 50%;
  background: #5a4e80;
}
.url {
  flex: 1;
  min-width: 0;
  margin-left: -14px;
  padding: 0;
  border: 0;
  outline: 0;
  font-size: 28px;
  line-height: 40px;
  color: transparent;
  background: linear-gradient(90deg, #fff 121px, #b8b3c6 121px);
  background-clip: text;
}
.toolbar > .ext {
  margin-left: 36px;
}
.toolbar > .plain.puzzle {
  margin-left: 40px;
}
.toolbar > .plain.more {
  margin-left: 48px;
}
.bar {
  width: 4px;
  height: 32px;
  border-radius: 2px;
  background: #3b3253;
}
.toolbar .bar {
  margin: 0 32px;
}
.bookmarks {
  display: flex;
  align-items: center;
  height: 68px;
  padding-left: 26px;
  background: #5a4e80;
  font-size: 24px;
  line-height: 32px;
}
.bookmarks .bar {
  margin: 0 28px 0 30px;
}
.bookmarks a {
  display: flex;
  gap: 12px;
  margin-right: 42px;
}

/* Application */
.app {
  flex: 1;
  min-height: 0;
  display: flex;
  background: linear-gradient(135deg, #141a27 0%, #1c2431 100%);
}
.sidebar {
  flex: none;
  display: flex;
  flex-direction: column;
  width: 512px;
  border: 2px solid #2d3442;
  background: #202734;
}
.brand {
  display: flex;
  align-items: center;
  gap: 16px;
  padding: 32px;
  border-bottom: 2px solid #2d3442;
}
.logo {
  display: flex;
  align-items: center;
  justify-content: center;
  width: 64px;
  height: 64px;
  border-radius: 16px;
  background: linear-gradient(90deg, #5ec269, #4e81ee);
  color: #fff;
}
.brand-name {
  font-size: 40px;
  font-weight: 700;
  line-height: 56px;
  color: transparent;
  background: linear-gradient(90deg, #54b685, #4e81ee);
  background-clip: text;
  filter: drop-shadow(0 0 32px rgb(84 182 133 / 25%));
}
.menu {
  flex: 1;
  display: flex;
  flex-direction: column;
  gap: 8px;
  padding: 32px;
}
.menu a {
  display: flex;
  align-items: center;
  gap: 24px;
  height: 96px;
  padding: 0 24px;
  border-radius: 24px;
  font-size: 32px;
  font-weight: 500;
  line-height: 48px;
}
.menu-icon {
  display: flex;
  justify-content: center;
  width: 48px;
  color: #6c7380;
}
.menu a.active {
  background: #223231;
  color: #75dc86;
}
.menu a.active .menu-icon {
  color: #4ea356;
}
.account {
  padding: 32px;
  border-top: 2px solid #2d3442;
}
.account-card {
  display: flex;
  align-items: center;
  gap: 24px;
  padding: 24px;
  border-radius: 24px;
  background: #2d3442;
}
.avatar {
  width: 80px;
  height: 80px;
  border-radius: 50%;
  background: linear-gradient(90deg, #76dc85, #6ea2f0);
  color: #fff;
  font-size: 32px;
  font-weight: 700;
  line-height: 80px;
  text-align: center;
}
.user-name {
  font-weight: 500;
}
.user-plan {
  font-size: 24px;
  line-height: 32px;
  color: #9ca3af;
}
.content {
  flex: 1;
  min-width: 0;
  display: flex;
  flex-direction: column;
}
.topbar {
  flex: none;
  display: flex;
  align-items: center;
  height: 148px;
  padding: 0 48px 0 80px;
  border: 2px solid #2d3442;
  background: #202734;
}
h1 {
  margin-right: auto;
  font-size: 40px;
  font-weight: 600;
  line-height: 56px;
  color: transparent;
  background: linear-gradient(90deg, #54b685, #4e81ee);
  background-clip: text;
}
.search {
  display: flex;
  align-items: center;
  gap: 16px;
  width: 416px;
  height: 80px;
  padding: 0 24px;
  border-radius: 16px;
  background: #3a4050;
  color: #6c7380;
}
.search input {
  flex: 1;
  min-width: 0;
  padding: 0;
  border: 0;
  outline: 0;
  background: none;
  font-size: 32px;
  line-height: 48px;
  color: #fff;
}
.search input::placeholder {
  color: #9ca3af;
  opacity: 1;
}
.bell {
  position: relative;
  margin: 0 56px 0 40px;
}
.bell i {
  position: absolute;
  left: 28px;
  bottom: 40px;
  width: 24px;
  height: 24px;
  border-radius: 50%;
  background: #bf4a48;
}
.sun {
  margin-right: 40px;
}
.nova {
  display: flex;
  align-items: center;
  gap: 16px;
  height: 72px;
  padding: 0 32px;
  border: 0;
  border-radius: 16px;
  background: linear-gradient(90deg, #5ec269, #43936d);
  box-shadow: 0 16px 32px rgb(0 0 0 / 15%);
  color: #fff;
  font-weight: 500;
}
.nova i {
  width: 16px;
  height: 16px;
  border-radius: 50%;
  background: #dff3e1;
}
.viewport {
  flex: 1;
  min-height: 0;
  display: flex;
  overflow: hidden;
}
main {
  flex: 1;
  min-width: 0;
  max-width: 2560px;
  margin: 0 auto;
  padding-top: 48px;
}
.scrollbar {
  flex: none;
  width: 12px;
}
.scrollbar i {
  display: block;
  height: 41.7%;
  border-radius: 6px;
  background: #54b685;
}
.title {
  font-size: 48px;
  font-weight: 700;
  line-height: 64px;
  color: transparent;
  background: linear-gradient(90deg, #54b685, #4e81ee);
  background-clip: text;
}
.label {
  margin: 48px 0 16px;
  font-weight: 500;
  color: #d1d5db;
}
.modes {
  display: flex;
  gap: 16px;
}
.outline {
  display: flex;
  align-items: center;
  justify-content: center;
  gap: 16px;
  height: 98px;
  padding: 0 48px;
  border: 4px solid #e5e7eb;
  border-radius: 16px;
  background: none;
}
.outline.mode {
  border-radius: 24px;
  font-weight: 500;
}
.outline.chosen {
  border-color: transparent;
  background: linear-gradient(135deg, #54b685, #4e81ee);
  color: #fff;
}
.outline.solid {
  border-color: #4e81ee;
  background: #4e81ee;
  color: #fff;
}
.status {
  display: flex;
  align-items: center;
  justify-content: center;
  gap: 14px;
  margin: 64px 0;
  font-size: 48px;
  font-weight: 700;
  line-height: 64px;
  filter: drop-shadow(0 0 20px rgb(84 182 133 / 55%));
}
.status span {
  color: transparent;
  background: linear-gradient(90deg, #54b685, #4e81ee);
  background-clip: text;
}
.cards {
  display: grid;
  grid-template-columns: 1fr 1fr;
  gap: 48px;
}
.card {
  min-width: 0;
  padding: 48px;
  border: 2px solid #3f4552;
  border-radius: 32px;
  background: #202734;
}
h3 {
  margin-bottom: 32px;
  font-size: 32px;
  font-weight: 600;
  line-height: 48px;
  color: #fff;
}
h3.soft {
  margin: 32px 0 24px;
  color: #e5e7eb;
}
.sources {
  display: grid;
  grid-template-columns: 1fr 1fr;
  gap: 24px;
}
.map-frame {
  padding: 32px;
  border: 2px solid #3b424d;
  border-radius: 24px;
  background: #1c222e;
}
.map {
  position: relative;
  height: 768px;
  border-radius: 16px;
  overflow: hidden;
  background: #f2efe9;
}
.tiles {
  width: 100%;
  height: 100%;
}
.places,
.regions {
  font-family: "Noto Sans", sans-serif;
  paint-order: stroke;
  stroke: #f6f3ee;
  stroke-width: 4px;
}
.places {
  fill: #3b3b3b;
}
.regions {
  font-style: italic;
}
.zoom {
  position: absolute;
  left: 20px;
  top: 20px;
  border: 4px solid rgb(0 0 0 / 20%);
  border-radius: 8px;
  background-clip: padding-box;
}
.zoom button {
  display: block;
  width: 60px;
  height: 60px;
  padding: 12px 0 0;
  border: 0;
  background: #fff;
  color: #000;
  font: 700 48px/44px "Liberation Mono", monospace;
}
.zoom button:first-child {
  border-bottom: 2px solid #ccc;
}
.draw {
  position: absolute;
  right: 40px;
  top: 40px;
  display: grid;
  gap: 20px;
}
.group {
  display: grid;
  gap: 4px;
  padding: 4px;
  border: 4px solid rgb(0 0 0 / 20%);
  border-radius: 8px;
}
.group button {
  display: flex;
  align-items: center;
  justify-content: center;
  width: 60px;
  height: 60px;
  padding: 0;
  border: 2px solid #ccc;
  border-radius: 4px;
  background: #fff;
}
.group.pale button {
  background: #f4f4f4;
}
.credit {
  position: absolute;
  right: 0;
  bottom: 0;
  display: flex;
  align-items: center;
  gap: 8px;
  padding: 0 10px;
  background: rgb(255 255 255 / 80%);
  font: 24px/34px "Liberation Sans", Arial, sans-serif;
  color: #333;
}
.credit a {
  color: #2a76a6;
}
.stats {
  display: grid;
  grid-template-columns: 1fr 1fr;
  gap: 32px;
}
.stat {
  padding: 32px;
  border-radius: 16px;
}
.stat.green { background: #212f33; }
.stat.blue { background: #212c46; }
.stat-head {
  display: flex;
  align-items: center;
  justify-content: space-between;
  margin-bottom: 16px;
  font-size: 32px;
  font-weight: 600;
  line-height: 48px;
}
.badge {
  padding: 0 16px;
  border-radius: 24px;
  background: #dd524c;
  color: #fff;
  font-size: 24px;
}
.reading {
  color: #9ca3af;
}
.origin {
  display: flex;
  align-items: center;
  gap: 16px;
  margin: 32px 0;
  font-size: 24px;
  line-height: 32px;
  color: #9ca3af;
}
.origin svg {
  color: #4e81ee;
}
.insights {
  padding: 32px;
  border: 2px solid #24376c;
  border-radius: 16px;
  background: linear-gradient(135deg, #202b46, #242843);
  line-height: 46px;
  color: #d1d5db;
}
.insights-head {
  display: flex;
  align-items: center;
  gap: 16px;
  margin-bottom: 16px;
  color: #9dc2f9;
}
h4 {
  flex: 1;
  font-size: 32px;
  font-weight: 600;
  line-height: 48px;
}
.insights-head span {
  font-size: 24px;
  line-height: 32px;
  color: #4e81ee;
}
h5 {
  margin: 32px 0 14px;
  font-size: 28px;
  font-weight: 700;
  line-height: 40px;
  color: #fff;
}
h5.next {
  margin-top: 48px;
}
ul {
  display: grid;
  gap: 24px;
  padding: 0;
  list-style: none;
}
li {
  position: relative;
  padding-left: 48px;
}
li::before {
  content: "";
  position: absolute;
  left: 19px;
  top: 24px;
  width: 10px;
  height: 10px;
  border-radius: 50%;
  background: #5ec269;
}
li strong {
  font-weight: 600;
  color: #f9fafb;
}
li ul {
  margin-top: 16px;
  line-height: 40px;
}
</style>
